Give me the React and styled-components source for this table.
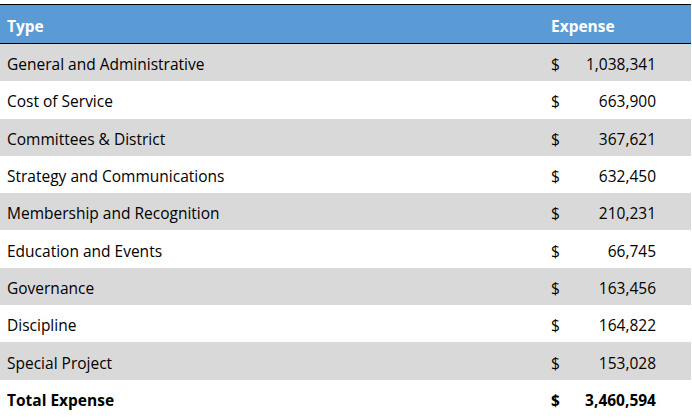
import * as React from "react";
import styled, { createGlobalStyle } from "styled-components";

const GlobalStyle = createGlobalStyle`
  body {
    margin: 0;
    padding-top: 4px;
    background: #ffffff;
    font-family: "Open Sans", "Noto Sans", sans-serif;
  }
`;

const Table = styled.div`
  width: 691px;
  border-top: 1px solid #000;
  display: flex;
  flex-direction: column;
`;

const Row = styled.div`
  box-sizing: border-box;
  display: grid;
  grid-template-columns: 545px 1fr;
  align-items: center;
  padding-top: 3px;
  height: ${(props) => props.h || "37.3px"};
  background-color: ${(props) => props.bg || "#ffffff"};
  border-bottom: ${(props) => (props.header ? "1px solid #000" : "none")};
  color: ${(props) => (props.header ? "#ffffff" : "#000000")};
  font-weight: ${(props) => (props.bold ? 700 : 400)};
  font-size: 15.5px;
`;

const TypeCell = styled.div`
  padding-left: 7px;
  white-space: nowrap;
`;

const AmountCell = styled.div`
  display: flex;
  justify-content: space-between;
  padding-left: 6px;
  padding-right: 35px;
`;

const HeaderCell = styled.div`
  padding-left: ${(props) => props.pl || "7px"};
`;

const rows = [
  ["General and Administrative", "1,038,341"],
  ["Cost of Service", "663,900"],
  ["Committees & District", "367,621"],
  ["Strategy and Communications", "632,450"],
  ["Membership and Recognition", "210,231"],
  ["Education and Events", "66,745"],
  ["Governance", "163,456"],
  ["Discipline", "164,822"],
  ["Special Project", "153,028"],
];

export default function App() {
  return (
    <>
      <GlobalStyle />
      <Table>
        <Row header bold bg="#5b9bd5" h="39px">
          <HeaderCell>Type</HeaderCell>
          <HeaderCell pl="6px">Expense</HeaderCell>
        </Row>
        {rows.map(([type, amount], i) => (
          <Row key={type} bg={i % 2 === 0 ? "#d9d9d9" : "#ffffff"}>
            <TypeCell>{type}</TypeCell>
            <AmountCell>
              <span>$</span>
              <span>{amount}</span>
            </AmountCell>
          </Row>
        ))}
        <Row bold>
          <TypeCell>Total Expense</TypeCell>
          <AmountCell>
            <span>$</span>
            <span>3,460,594</span>
          </AmountCell>
        </Row>
      </Table>
    </>
  );
}
